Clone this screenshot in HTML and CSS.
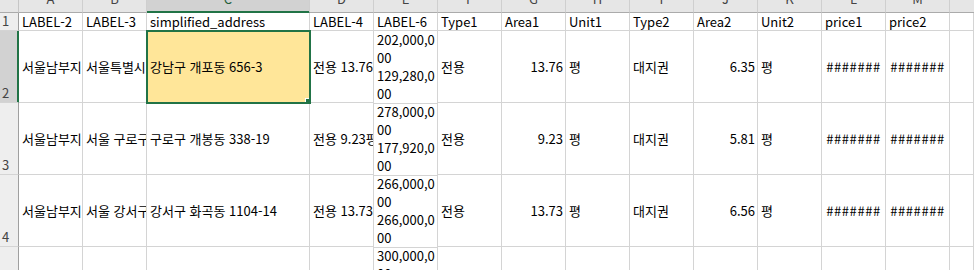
FILE: index.html
```html
<!DOCTYPE html>
<html lang="ko">
<head>
    <meta charset="UTF-8">
    <meta name="viewport" content="width=device-width, initial-scale=1.0">
    <title>Sheet1</title>
    <link rel="stylesheet" href="styles.css">
</head>
<body>
    <div class="sheet">
        <!-- column headers -->
        <div class="corner"></div>
        <div class="hd">A</div>
        <div class="hd">B</div>
        <div class="hd hd-sel">C</div>
        <div class="hd">D</div>
        <div class="hd">E</div>
        <div class="hd">F</div>
        <div class="hd">G</div>
        <div class="hd">H</div>
        <div class="hd">I</div>
        <div class="hd">J</div>
        <div class="hd">K</div>
        <div class="hd">L</div>
        <div class="hd">M</div>
        <div class="hd hd-last"></div>

        <!-- row 1 -->
        <div class="rh">1</div>
        <div class="c">LABEL-2</div>
        <div class="c">LABEL-3</div>
        <div class="c">simplified_address</div>
        <div class="c">LABEL-4</div>
        <div class="c">LABEL-6</div>
        <div class="c">Type1</div>
        <div class="c">Area1</div>
        <div class="c">Unit1</div>
        <div class="c">Type2</div>
        <div class="c">Area2</div>
        <div class="c">Unit2</div>
        <div class="c">price1</div>
        <div class="c">price2</div>
        <div class="c"></div>

        <!-- row 2 -->
        <div class="rh rh-sel">2</div>
        <div class="c">서울남부지방법원</div>
        <div class="c">서울특별시 강남구 개포동 656-3</div>
        <div class="c sel">강남구 개포동 656-3</div>
        <div class="c">전용 13.76평</div>
        <div class="c wrap">202,000,000<br>129,280,000</div>
        <div class="c">전용</div>
        <div class="c num">13.76</div>
        <div class="c">평</div>
        <div class="c">대지권</div>
        <div class="c num">6.35</div>
        <div class="c">평</div>
        <div class="c hash">#######</div>
        <div class="c hash">#######</div>
        <div class="c"></div>

        <!-- row 3 -->
        <div class="rh">3</div>
        <div class="c">서울남부지방법원</div>
        <div class="c">서울 구로구 개봉동 338-19</div>
        <div class="c">구로구 개봉동 338-19</div>
        <div class="c">전용 9.23평</div>
        <div class="c wrap">278,000,000<br>177,920,000</div>
        <div class="c">전용</div>
        <div class="c num">9.23</div>
        <div class="c">평</div>
        <div class="c">대지권</div>
        <div class="c num">5.81</div>
        <div class="c">평</div>
        <div class="c hash">#######</div>
        <div class="c hash">#######</div>
        <div class="c"></div>

        <!-- row 4 -->
        <div class="rh">4</div>
        <div class="c">서울남부지방법원</div>
        <div class="c">서울 강서구 화곡동 1104-14</div>
        <div class="c">강서구 화곡동 1104-14</div>
        <div class="c">전용 13.73평</div>
        <div class="c wrap">266,000,000<br>266,000,000</div>
        <div class="c">전용</div>
        <div class="c num">13.73</div>
        <div class="c">평</div>
        <div class="c">대지권</div>
        <div class="c num">6.56</div>
        <div class="c">평</div>
        <div class="c hash">#######</div>
        <div class="c hash">#######</div>
        <div class="c"></div>

        <!-- row 5 -->
        <div class="rh">5</div>
        <div class="c"></div>
        <div class="c"></div>
        <div class="c"></div>
        <div class="c"></div>
        <div class="c wrap">300,000,000<br>192,000,000</div>
        <div class="c"></div>
        <div class="c"></div>
        <div class="c"></div>
        <div class="c"></div>
        <div class="c"></div>
        <div class="c"></div>
        <div class="c"></div>
        <div class="c"></div>
        <div class="c"></div>
    </div>
</body>
</html>
```

FILE: styles.css
```css
* {
    box-sizing: border-box;
}
html, body {
    margin: 0;
    height: 100%;
    overflow: hidden;
    background: #ffffff;
}
body {
    font-family: "Noto Sans CJK KR", "Malgun Gothic", sans-serif;
    font-size: 13px;
    color: #000000;
}
.sheet {
    display: grid;
    grid-template-columns: 19px 64px 64px 163px repeat(10, 64px) 1fr;
    grid-template-rows: 13px 18px repeat(4, 72px);
}

/* headers */
.corner {
    background: #e6e6e6;
    border-right: 1px solid #c6c6c6;
    border-bottom: 1px solid #ababab;
}
.hd {
    display: flex;
    align-items: flex-end;
    justify-content: center;
    overflow: hidden;
    padding-bottom: 6px;
    line-height: 14px;
    color: #444444;
    background: #e6e6e6;
    border-right: 1px solid #cfcfcf;
    border-bottom: 1px solid #ababab;
}
.hd-sel {
    background: #d2d2d2;
    color: #1f5f3a;
    border-bottom: 1px solid #217346;
    box-shadow: inset 0 -1px 0 #217346;
}
.hd-last {
    border-right: none;
}
.rh {
    display: flex;
    align-items: flex-end;
    overflow: hidden;
    padding: 0 0 2px 2px;
    line-height: 14px;
    color: #444444;
    background: #eeeeee;
    border-right: 1px solid #9f9f9f;
    border-bottom: 1px solid #d4d4d4;
}
.rh-sel {
    background: #d2d2d2;
    border-right: 1px solid #217346;
    box-shadow: inset -1px 0 0 #217346;
}

/* cells */
.c {
    display: flex;
    align-items: center;
    overflow: hidden;
    white-space: nowrap;
    padding: 0 2px 0 3px;
    line-height: 18px;
    border-right: 1px solid #d4d4d4;
    border-bottom: 1px solid #d4d4d4;
}
.num {
    justify-content: flex-end;
}
.hash {
    justify-content: center;
    padding: 0;
    letter-spacing: 0.6px;
}
.wrap {
    display: block;
    white-space: normal;
    word-break: break-all;
    align-self: center;
}
.sel {
    position: relative;
    background: #ffe699;
    outline: 2px solid #217346;
    outline-offset: -1px;
}
.sel::after {
    content: '';
    position: absolute;
    right: -4px;
    bottom: -4px;
    width: 6px;
    height: 6px;
    background: #217346;
    border: 1px solid #ffffff;
    z-index: 2;
}
```
